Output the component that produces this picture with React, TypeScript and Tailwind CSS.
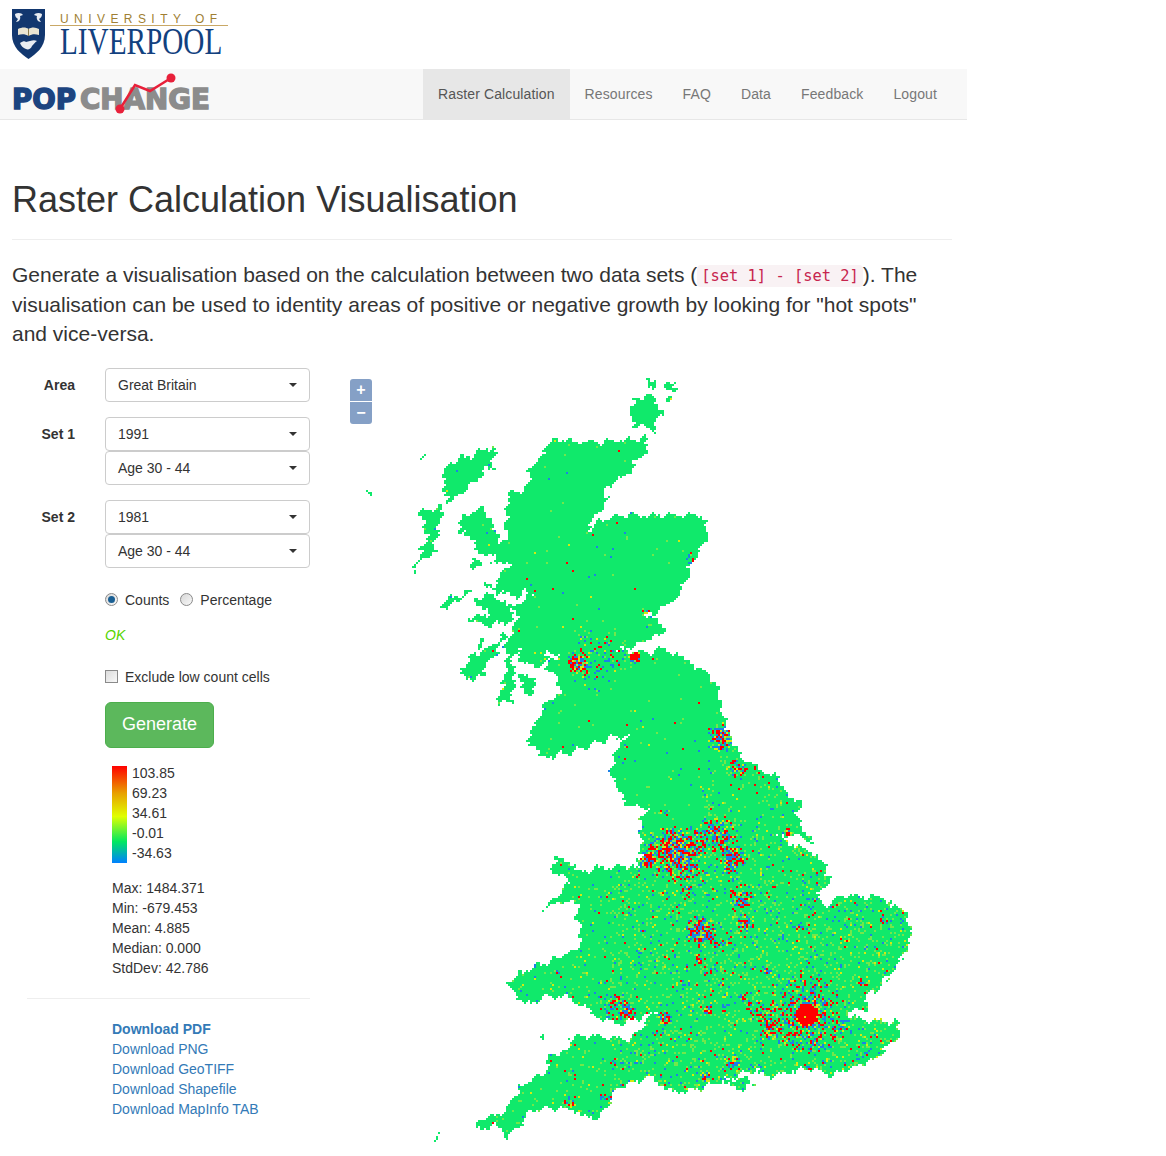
import React from 'react';

type Pt = [number, number];

const MAINLAND: Pt[] = [
  [552,438],[573,442],[600,442],[623,440],[648,438],[645,455],[630,470],[613,485],[600,495],[610,501],[597,513],[587,530],
  [600,522],[620,515],[650,515],[700,515],[708,527],[705,543],[693,560],[688,577],[677,597],[667,608],[653,613],[640,620],
  [657,617],[667,628],[653,637],[633,647],[617,650],[650,653],[663,647],[693,663],[717,683],[722,710],[730,737],[747,763],
  [777,777],[783,790],[802,803],[797,813],[805,833],[817,843],[793,835],[777,837],[797,845],[820,857],[830,880],[817,900],
  [827,907],[840,895],[880,897],[907,913],[912,937],[903,957],[890,977],[877,990],[867,993],[867,1008],[843,1012],[863,1020],
  [900,1022],[897,1040],[873,1060],[833,1075],[807,1068],[770,1077],[753,1070],[723,1080],[703,1088],[672,1093],[650,1077],
  [617,1088],[600,1118],[587,1118],[573,1110],[553,1108],[533,1110],[517,1127],[507,1137],[497,1125],[477,1130],[477,1120],
  [507,1110],[520,1088],[547,1070],[550,1053],[565,1053],[570,1038],[593,1036],[630,1040],[640,1027],[660,1007],[643,1018],
  [617,1025],[597,1017],[573,1000],[562,997],[543,997],[527,1005],[507,983],[523,970],[547,962],[577,950],[582,933],[577,920],
  [577,902],[560,902],[543,910],[563,890],[570,883],[550,868],[557,858],[573,862],[580,873],[597,868],[627,866],[643,870],
  [633,860],[642,857],[640,823],[650,808],[630,807],[620,790],[610,772],[613,760],[620,740],[633,735],[613,738],[587,747],
  [570,753],[543,758],[530,743],[528,730],[537,727],[537,717],[553,698],[560,695],[558,680],[547,670],[547,653],[563,653],
  [543,663],[533,670],[522,660],[517,647],[512,663],[515,680],[510,703],[497,703],[503,687],[507,660],[505,650],[510,633],
  [517,620],[514,608],[533,590],[515,597],[500,592],[482,587],[500,583],[500,570],[513,560],[495,565],[493,558],[507,548],
  [505,520],[508,497],[527,487],[530,467],[541,457],
];

const ISLANDS: Pt[][] = [
  [[633,400],[647,393],[653,400],[663,413],[657,420],[653,433],[648,427],[637,427],[630,417]],
  [[645,382],[655,378],[658,390],[648,388]],
  [[667,385],[678,380],[672,392],[665,392]],
  [[668,398],[673,398],[672,403],[667,403]],
  [[495,445],[493,467],[483,470],[480,480],[460,493],[447,503],[443,478],[447,463],[477,453]],
  [[420,512],[445,507],[437,530],[435,553],[423,557],[410,578],[417,563],[427,537]],
  [[465,515],[483,507],[495,525],[498,540],[513,543],[510,550],[492,557],[478,552],[470,538],[457,530]],
  [[472,560],[483,563],[480,570],[470,565]],
  [[440,602],[472,590],[457,602],[443,608]],
  [[475,598],[493,595],[510,607],[515,615],[508,623],[483,625],[468,618],[493,613],[477,605]],
  [[460,670],[470,657],[483,652],[493,647],[503,633],[507,637],[497,650],[487,663],[483,675],[470,680]],
  [[475,645],[483,637],[480,647]],
  [[520,675],[528,672],[537,690],[527,695],[520,687]],
  [[722,1082],[750,1077],[752,1083],[740,1090]],
  [[433,1141],[443,1133],[438,1142]],
  [[540,1036],[543,1036],[543,1041],[540,1041]],
  [[367,489],[376,490],[372,494]],
  [[421,457],[426,457],[426,459],[421,459]],
  [[498,394],[501,394],[501,396],[498,396]],
  [[514,394],[517,394],[517,396],[514,396]],
  [[580,400],[584,400],[584,402],[580,402]],
];

// x, y, radius, strength
const HOT_SPOTS: number[][] = [
  [807,1015,10,4],[807,1015,32,0.45],[677,853,24,0.95],[647,860,7,1.6],[717,833,15,0.8],[732,860,12,0.7],[740,897,11,0.7],
  [700,932,13,1],[745,923,7,0.8],[723,737,12,1.1],[737,768,8,0.7],[578,663,9,1.5],[635,657,5,3],[600,660,26,0.25],
  [690,558,5,0.9],[647,613,4,1],[665,1018,6,1],[627,1013,7,0.9],[613,1003,13,0.4],[733,1062,6,0.9],[705,1077,5,1],
  [807,1068,4,0.7],[797,927,4,0.8],[768,972,4,1.1],[742,997,4,0.9],[770,1030,9,0.6],[843,1025,5,0.8],[863,982,4,0.8],
  [883,920,4,0.5],[570,1103,5,0.7],[605,1097,4,0.7],[788,832,4,1],[708,1010,4,1],[687,892,6,0.7],[700,960,5,0.5],
  [760,1010,12,0.35],[640,823,4,0.8],[664,812,5,0.2],[709,970,3,0.8],[720,945,6,0.4],
];

const inside = (x: number, y: number, poly: Pt[]) => {
  let hit = false;
  for (let i = 0, j = poly.length - 1; i < poly.length; j = i++) {
    const [xi, yi] = poly[i];
    const [xj, yj] = poly[j];
    if (yi > y !== yj > y && x < ((xj - xi) * (y - yi)) / (yj - yi) + xi) hit = !hit;
  }
  return hit;
};

const backgroundNoise = (x: number, y: number) => {
  if (y < 740) return 0.012;
  if (y < 830 && x < 700) return 0.02;
  if (x < 610) return 0.06;
  if (y < 830) return 0.09;
  return 0.16;
};

// builds the raster as 2px cells, one path string per colour
const buildRaster = () => {
  let seed = 20160;
  const rand = () => {
    seed = (seed + 0x6d2b79f5) | 0;
    let t = Math.imul(seed ^ (seed >>> 15), 1 | seed);
    t = (t + Math.imul(t ^ (t >>> 7), 61 | t)) ^ t;
    return ((t ^ (t >>> 14)) >>> 0) / 4294967296;
  };
  const paths: Record<string, string> = { green: '', lime: '', yellow: '', blue: '', red: '' };
  for (let y = 372; y < 1146; y += 2) {
    for (let x = 362; x < 918; x += 2) {
      const cx = x + 1;
      const cy = y + 1;
      // wobble the sample point so the coast looks less like straight lines
      const wx = cx + 2.2 * Math.sin(cy * 0.37 + cx * 0.09) + 1.3 * Math.sin(cy * 0.91 + cx * 0.43);
      const wy = cy + 2.2 * Math.sin(cx * 0.33 - cy * 0.11) + 1.3 * Math.sin(cx * 0.87 + cy * 0.39);
      if (!inside(wx, wy, MAINLAND) && !ISLANDS.some((p) => inside(wx, wy, p))) continue;
      let heat = 0;
      for (const [hx, hy, r, s] of HOT_SPOTS) {
        const d2 = ((cx - hx) ** 2 + (cy - hy) ** 2) / (r * r);
        if (d2 < 1.6) heat += s * Math.exp(-d2);
      }
      const p = rand();
      let colour = 'green';
      if (p < backgroundNoise(cx, cy) + heat) {
        const q = rand();
        if (heat > 1.6) colour = q < 0.94 ? 'red' : 'yellow';
        else if (heat > 0.1) colour = q < 0.38 ? 'red' : q < 0.72 ? 'blue' : q < 0.85 ? 'yellow' : 'lime';
        else colour = q < 0.6 ? 'lime' : q < 0.72 ? 'yellow' : q < 0.92 ? 'blue' : 'red';
      }
      paths[colour] += `M${x} ${y}h2v2h-2z`;
    }
  }
  return paths;
};

const RasterMap = () => {
  const paths = React.useMemo(buildRaster, []);
  return (
    <svg width="600" height="780" viewBox="340 370 600 780" shapeRendering="crispEdges" className="block">
      <path d={paths.green} fill="#10e96b" />
      <path d={paths.lime} fill="#72e84a" />
      <path d={paths.yellow} fill="#d6ea10" />
      <path d={paths.blue} fill="#1c82e6" />
      <path d={paths.red} fill="#ff0000" />
    </svg>
  );
};

const LiverpoolLogo = () => (
  <svg width="230" height="69" viewBox="0 0 230 69" className="block">
    <path d="M12 9H45V35C45 47 36 54 28.5 59C21 54 12 47 12 35Z" fill="#12376f" />
    <path d="M15 14c3-2 7-1 8 1l-3 1c1 3-1 6-4 6l2-3c-2-1-3-3-3-5z" fill="#e8ecf2" />
    <path d="M42 14c-3-2-7-1-8 1l3 1c-1 3 1 6 4 6l-2-3c2-1 3-3 3-5z" fill="#e8ecf2" />
    <path d="M18 29c4-2 8-2 10.500 0c3-2 7-2 10.500 0v6c-4-1-7-1-10.500 1c-3-2-7-2-10.500-1z" fill="#e9e4d2" />
    <path d="M28.500 29v7" stroke="#8a7a4a" strokeWidth="1" />
    <path d="M20 43c3-2 5-2 6-1l4-1c3-1 5-1 7 0c-2 1-3 3-5 5c-1 3-4 4-6 3c-3-1-5-3-6-6z" fill="#e8ecf2" />
    <text x="60" y="23" textLength="157" fontFamily="Liberation Sans" fontSize="12" fill="#a07f33">
      UNIVERSITY OF
    </text>
    <rect x="50" y="25" width="178" height="1" fill="#c9a866" />
    <text transform="translate(60 54) scale(0.79 1)" fontFamily="Liberation Serif" fontSize="37" fill="#12417f">
      LIVERPOOL
    </text>
  </svg>
);

const PopChangeLogo = () => (
  <svg width="210" height="50" viewBox="0 0 210 50" className="block">
    <text x="0" y="40" textLength="64" lengthAdjust="spacingAndGlyphs" fontFamily="DejaVu Sans" fontWeight="700" fontSize="29" fill="#1c4480" stroke="#1c4480" strokeWidth="1.5">
      POP
    </text>
    <text x="68" y="40" textLength="130" lengthAdjust="spacingAndGlyphs" fontFamily="DejaVu Sans" fontWeight="700" fontSize="29" fill="#8c8c8c" stroke="#8c8c8c" strokeWidth="1.5">
      CHANGE
    </text>
    <path d="M108 40L123 16L138 22L159 9" fill="none" stroke="#e8203a" strokeWidth="2.5" />
    <circle cx="108" cy="40" r="4.500" fill="#e8203a" />
    <circle cx="159" cy="9" r="4.500" fill="#e8203a" />
  </svg>
);

const NAV_ITEMS = ['Raster Calculation', 'Resources', 'FAQ', 'Data', 'Feedback', 'Logout'];

const Select = ({ value }: { value: string }) => (
  <div className="flex h-[34px] w-[205px] items-center justify-between rounded-[4px] border border-[#ccc] bg-white pl-3 pr-3 text-sm text-[#333]">
    <span>{value}</span>
    <span className="h-0 w-0 border-x-4 border-t-4 border-x-transparent border-t-[#333]" />
  </div>
);

const FieldRow = ({ label, values }: { label: string; values: string[] }) => (
  <div className="flex">
    <div className="w-[63px] pt-[8px] text-right text-sm font-bold leading-[18px] text-[#333]">{label}</div>
    <div className="ml-[30px] flex flex-col">
      {values.map((value, index) => (
        <Select key={index} value={value} />
      ))}
    </div>
  </div>
);

const Radio = ({ checked }: { checked?: boolean }) => (
  <span className="flex h-[13px] w-[13px] shrink-0 items-center justify-center rounded-full border border-[#8a8a8a] bg-gradient-to-br from-[#d8d8d8] to-[#f8f8f8]">
    {checked && <span className="h-[7px] w-[7px] rounded-full bg-[#1a5f93]" />}
  </span>
);

const LEGEND = ['103.85', '69.23', '34.61', '-0.01', '-34.63'];
const STATS = ['Max: 1484.371', 'Min: -679.453', 'Mean: 4.885', 'Median: 0.000', 'StdDev: 42.786'];
const DOWNLOADS = ['Download PNG', 'Download GeoTIFF', 'Download Shapefile', 'Download MapInfo TAB'];

export default function App() {
  return (
    <div className="h-[1156px] w-[967px] overflow-hidden bg-white font-['Liberation_Sans',Arial,sans-serif] text-sm text-[#333]">
      <div className="h-[69px]">
        <LiverpoolLogo />
      </div>

      <nav className="flex h-[51px] items-stretch justify-between border-b border-[#e7e7e7] bg-[#f8f8f8] pr-[15px]">
        <div className="pl-3">
          <PopChangeLogo />
        </div>
        <ul className="flex tracking-[0.12px]">
          {NAV_ITEMS.map((item, index) => (
            <li
              key={item}
              className={`flex items-center px-[15px] ${index === 0 ? 'bg-[#e7e7e7] text-[#555]' : 'text-[#777]'}`}
            >
              {item}
            </li>
          ))}
        </ul>
      </nav>

      <main className="pl-3 pr-[15px]">
        <h1 className="mt-[60px] text-[36px] leading-[40px] text-[#333]">Raster Calculation Visualisation</h1>
        <hr className="mt-[19px] border-[#eee]" />
        <p className="mt-[20px] w-[930px] text-[21px] leading-[29.6px] text-[#333]">
          Generate a visualisation based on the calculation between two data sets (
          <code className="rounded-[4px] bg-[#f9f2f4] px-[4px] py-[2px] align-[1px] font-['DejaVu_Sans_Mono',monospace] text-[15.4px] leading-none text-[#c7254e]">
            [set 1] - [set 2]
          </code>
          ). The visualisation can be used to identity areas of positive or negative growth by looking for "hot spots" and vice-versa.
        </p>

        <div className="mt-[19px] flex">
          <aside className="w-[328px] shrink-0">
            <div className="flex w-[298px] flex-col gap-[15px]">
              <FieldRow label="Area" values={['Great Britain']} />
              <FieldRow label="Set 1" values={['1991', 'Age 30 - 44']} />
              <FieldRow label="Set 2" values={['1981', 'Age 30 - 44']} />
            </div>

            <div className="ml-[93px]">
              <div className="mt-[23px] flex h-[18px] items-center">
                <Radio checked />
                <span className="ml-[7px]">Counts</span>
                <span className="ml-[11px]">
                  <Radio />
                </span>
                <span className="ml-[7px]">Percentage</span>
              </div>
              <div className="mt-[16px] h-[20px] italic leading-[20px] text-[#55d400]">OK</div>
              <div className="mt-[23px] flex h-[18px] items-center">
                <span className="h-[13px] w-[13px] border border-[#8a8a8a] bg-gradient-to-br from-[#dcdcdc] to-[#f8f8f8]" />
                <span className="ml-[7px]">Exclude low count cells</span>
              </div>
              <div className="mt-[16px] flex h-[46px] w-[109px] items-center justify-center rounded-[6px] border border-[#4cae4c] bg-[#5cb85c] text-[18px] text-white">
                Generate
              </div>
            </div>

            <div className="ml-[100px] mt-[18px] flex">
              <div className="h-[97px] w-[15px] bg-[linear-gradient(to_bottom,#ff0000_0%,#e8a000_28%,#e0ff00_52%,#00e860_78%,#0080ff_100%)]" />
              <div className="ml-[5px] -mt-[3px]">
                {LEGEND.map((value) => (
                  <div key={value} className="h-[20px] leading-[20px]">
                    {value}
                  </div>
                ))}
              </div>
            </div>

            <div className="ml-[100px] mt-[15px]">
              {STATS.map((stat) => (
                <div key={stat} className="h-[20px] leading-[20px]">
                  {stat}
                </div>
              ))}
            </div>

            <hr className="ml-[15px] mt-[20px] w-[283px] border-[#eee]" />

            <div className="ml-[100px] mt-[20px] text-[#337ab7]">
              <div className="h-[20px] font-bold leading-[20px]">Download PDF</div>
              {DOWNLOADS.map((link) => (
                <div key={link} className="h-[20px] leading-[20px]">
                  {link}
                </div>
              ))}
            </div>
          </aside>

          <div className="relative mt-[2px] h-[780px] w-[600px]">
            <RasterMap />
            <div className="absolute left-[10px] top-[9px] w-[22px] overflow-hidden rounded-[3px] text-white">
              <div className="flex h-[22px] items-center justify-center bg-[#85a0c6] text-[16px] font-bold leading-none">+</div>
              <div className="mt-px flex h-[22px] items-center justify-center bg-[#85a0c6] text-[16px] font-bold leading-none">−</div>
            </div>
          </div>
        </div>
      </main>
    </div>
  );
}
